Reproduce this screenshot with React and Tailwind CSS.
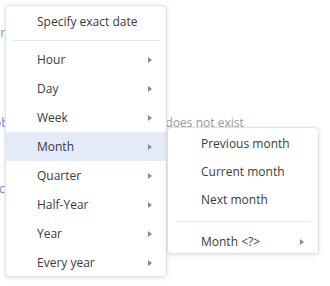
import React from "react";

const Arrow = () => (
  <svg width="4" height="6" viewBox="0 0 4 6" className="shrink-0">
    <path d="M0 0 L4 3 L0 6 Z" fill="#8a8a8a" />
  </svg>
);

const Item = ({ label, arrow, active, h = "h-[29px]", pl = "pl-[31px]", pr = "pr-[14px]" }) => (
  <div className={`flex items-center justify-between ${h} ${pl} ${pr} ${active ? "bg-[#e3eaf8]" : ""}`}>
    <span>{label}</span>
    {arrow && <Arrow />}
  </div>
);

export default function App() {
  const main = ["Hour", "Day", "Week", "Month", "Quarter", "Half-Year", "Year", "Every year"];
  return (
    <div className="relative w-[330px] h-[286px] overflow-hidden bg-white text-[12px] text-[#3a3a3a]" style={{ fontFamily: '"Open Sans", sans-serif' }}>
      <div className="flex flex-col text-[12px]">
        <div className="mt-[24px] ml-[-7px] text-[#6f8fc4]">or</div>
        <div className="mt-[72px] flex">
          <span className="ml-[-6px] text-[#6f8fc4]">ob</span>
          <span className="ml-[157px] text-[#9a96a0]">does not exist</span>
        </div>
        <div className="mt-[48px] ml-[-1px] text-[#6f8fc4]">co</div>
      </div>

      <div className="absolute left-[5px] top-[5px] w-[162px] h-[272px] bg-white border border-[#e2e2e2] rounded-[4px] shadow-[0_1px_4px_rgba(0,0,0,0.12)] pt-[1px]">
        <Item label="Specify exact date" />
        <div className="h-[9px] flex items-center px-[6px]">
          <div className="h-px w-full bg-[#e6e6e6]" />
        </div>
        {main.map((m) => (
          <Item key={m} label={m} arrow active={m === "Month"} />
        ))}
      </div>

      <div className="absolute left-[167px] top-[127px] w-[152px] h-[127px] bg-white border border-[#e2e2e2] rounded-[4px] shadow-[0_1px_4px_rgba(0,0,0,0.12)] pt-[2px]">
        <Item label="Previous month" h="h-[28px]" pl="pl-[33px]" />
        <Item label="Current month" h="h-[28px]" pl="pl-[33px]" />
        <Item label="Next month" h="h-[28px]" pl="pl-[33px]" />
        <div className="h-[14px] flex items-center px-[8px]">
          <div className="h-px w-full bg-[#e6e6e6]" />
        </div>
        <Item label="Month <?>" arrow h="h-[28px]" pl="pl-[33px]" pr="pr-[14px]" />
      </div>
    </div>
  );
}
